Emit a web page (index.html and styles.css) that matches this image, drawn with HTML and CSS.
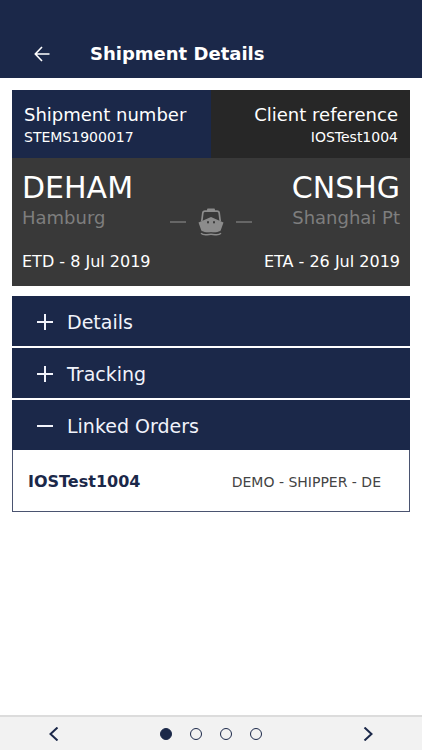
FILE: index.html
```
<!DOCTYPE html>
<html lang="en">
<head>
<meta charset="utf-8">
<meta name="viewport" content="width=device-width, initial-scale=1">
<title>Shipment Details</title>
<link rel="stylesheet" href="styles.css">
</head>
<body>
<header class="topbar">
  <button class="icon-button" type="button" aria-label="Back">
    <svg width="16" height="16" viewBox="0 0 16 16" fill="none" stroke="currentColor" stroke-width="1.6"><path d="M15.5 8H1.5M8 1L1.300 8L8 15"/></svg>
  </button>
  <h1 class="topbar-title">Shipment Details</h1>
</header>
<main class="content">
  <section class="card">
    <div class="references">
      <div class="reference reference-main">
        <h2 class="reference-label">Shipment number</h2>
        <p class="reference-value">STEMS1900017</p>
      </div>
      <div class="reference reference-client">
        <h2 class="reference-label">Client reference</h2>
        <p class="reference-value">IOSTest1004</p>
      </div>
    </div>
    <div class="route">
      <div class="port">
        <p class="port-code">DEHAM</p>
        <p class="port-name">Hamburg</p>
        <p class="port-date">ETD - 8 Jul 2019</p>
      </div>
      <div class="transport">
        <span class="dash"></span>
        <svg width="26" height="28" viewBox="0 0 26 28" fill="none">
          <path d="M3.800 13L4.800 5Q5 3.200 7 3.200H19Q21 3.200 21.200 5L22.200 13" stroke="#8c8c8c" stroke-width="1.700"/>
          <path d="M9 3.500V1.500Q9 .5 10 .5H16Q17 .5 17 1.500V3.500Z" fill="#8c8c8c"/>
          <path fill="#8c8c8c" fill-rule="evenodd" d="M13 9L25.500 14.500L22.300 23.500Q17.500 25.200 13 24.800Q8.500 25.200 3.700 23.500L.5 14.500ZM10 13A1 1.300 0 1 0 10 15.600A1 1.300 0 1 0 10 13ZM16 13A1 1.300 0 1 0 16 15.600A1 1.300 0 1 0 16 13Z"/>
          <path d="M3 23.200Q8 26 13 24.600Q18 26 23 23.200" stroke="#393939" stroke-width=".9"/>
          <path d="M3 25.200Q5 27.200 9 26.700Q13 25.700 17 26.700Q21 27.200 23 25.200" stroke="#8c8c8c" stroke-width="1.400"/>
        </svg>
        <span class="dash"></span>
      </div>
      <div class="port port-end">
        <p class="port-code">CNSHG</p>
        <p class="port-name">Shanghai Pt</p>
        <p class="port-date">ETA - 26 Jul 2019</p>
      </div>
    </div>
  </section>
  <section class="accordion">
    <button class="accordion-toggle" type="button" aria-expanded="false">
      <svg width="16" height="16" viewBox="0 0 16 16" stroke="currentColor" stroke-width="2"><path d="M0 8H16M8 0V16"/></svg>
      Details
    </button>
    <button class="accordion-toggle" type="button" aria-expanded="false">
      <svg width="16" height="16" viewBox="0 0 16 16" stroke="currentColor" stroke-width="2"><path d="M0 8H16M8 0V16"/></svg>
      Tracking
    </button>
    <div class="accordion-item">
      <button class="accordion-toggle" type="button" aria-expanded="true">
        <svg width="16" height="16" viewBox="0 0 16 16" stroke="currentColor" stroke-width="2"><path d="M0 8H16"/></svg>
        Linked Orders
      </button>
      <div class="order">
        <a class="order-link" href="#order">IOSTest1004</a>
        <span class="order-shipper">DEMO - SHIPPER - DE</span>
      </div>
    </div>
  </section>
</main>
<nav class="pager" aria-label="Shipments">
  <button class="icon-button" type="button" aria-label="Previous">
    <svg width="10" height="14" viewBox="0 0 10 14" fill="none" stroke="currentColor" stroke-width="2"><path d="M8.500 .5L1.500 7L8.500 13.500"/></svg>
  </button>
  <div class="dots">
    <button class="dot dot-active" type="button" aria-label="Page 1"></button>
    <button class="dot" type="button" aria-label="Page 2"></button>
    <button class="dot" type="button" aria-label="Page 3"></button>
    <button class="dot" type="button" aria-label="Page 4"></button>
  </div>
  <button class="icon-button" type="button" aria-label="Next">
    <svg width="10" height="14" viewBox="0 0 10 14" fill="none" stroke="currentColor" stroke-width="2"><path d="M1.500 .5L8.500 7L1.500 13.500"/></svg>
  </button>
</nav>
</body>
</html>
```
FILE: styles.css
```
* {
  box-sizing: border-box;
}

body {
  margin: 0;
  min-height: 100vh;
  display: flex;
  flex-direction: column;
  background: #fff;
  color: #fff;
  font-family: Verdana, "DejaVu Sans", sans-serif;
}

h1, h2, p {
  margin: 0;
  font-weight: normal;
}

button {
  font: inherit;
  border: 0;
  padding: 0;
}

svg {
  display: block;
  flex: none;
}

.topbar {
  display: flex;
  align-items: center;
  gap: 40px;
  padding: 42px 34px 12px;
  background: #1b2849;
}

.icon-button {
  background: none;
  color: inherit;
}

.topbar-title {
  font-size: 18px;
  line-height: 24px;
  font-weight: bold;
}

.content {
  flex: 1;
  padding: 12px;
}

.card {
  margin-bottom: 10px;
}

.references {
  display: grid;
  grid-template-columns: 1fr 1fr;
}

.reference {
  padding: 12px;
}

.reference-main {
  background: #1b2849;
}

.reference-client {
  background: #272727;
  text-align: right;
}

.reference-label {
  font-size: 18px;
  line-height: 26px;
}

.reference-value {
  font-size: 14px;
  line-height: 18px;
}

.route {
  display: flex;
  justify-content: space-between;
  padding: 12px 10px;
  background: #393939;
}

.port {
  flex: 1;
}

.port-end {
  text-align: right;
}

.port-code {
  font-size: 30px;
  line-height: 36px;
}

.port-name {
  margin-bottom: 20px;
  color: #7e7e7e;
  font-size: 18px;
  line-height: 24px;
}

.port-date {
  font-size: 16px;
  line-height: 24px;
  white-space: nowrap;
}

.transport {
  display: flex;
  align-items: center;
  align-self: flex-start;
  gap: 12px;
  padding-top: 38px;
}

.dash {
  width: 16px;
  height: 2px;
  background: #666;
}

.accordion {
  display: flex;
  flex-direction: column;
  gap: 2px;
}

.accordion-toggle {
  display: flex;
  align-items: center;
  gap: 14px;
  width: 100%;
  height: 50px;
  padding: 2px 25px 0;
  background: #1b2849;
  color: #f1f3fb;
  font-size: 19px;
}

.order {
  display: flex;
  align-items: center;
  justify-content: space-between;
  height: 62px;
  padding: 2px 28px 0 15px;
  border: 1px solid #4a5370;
  border-top: 0;
}

.order-link {
  color: #1b2849;
  font-size: 16px;
  font-weight: bold;
  text-decoration: none;
}

.order-shipper {
  color: #444;
  font-size: 14px;
}

.pager {
  display: flex;
  align-items: center;
  justify-content: space-between;
  height: 35px;
  padding: 0 49px;
  border-top: 2px solid #dcdcdc;
  background: #f2f2f2;
  color: #1b2849;
}

.dots {
  display: flex;
  gap: 18px;
}

.dot {
  width: 12px;
  height: 12px;
  border: 1px solid #1b2849;
  border-radius: 50%;
  background: none;
}

.dot-active {
  background: #1b2849;
}
```
